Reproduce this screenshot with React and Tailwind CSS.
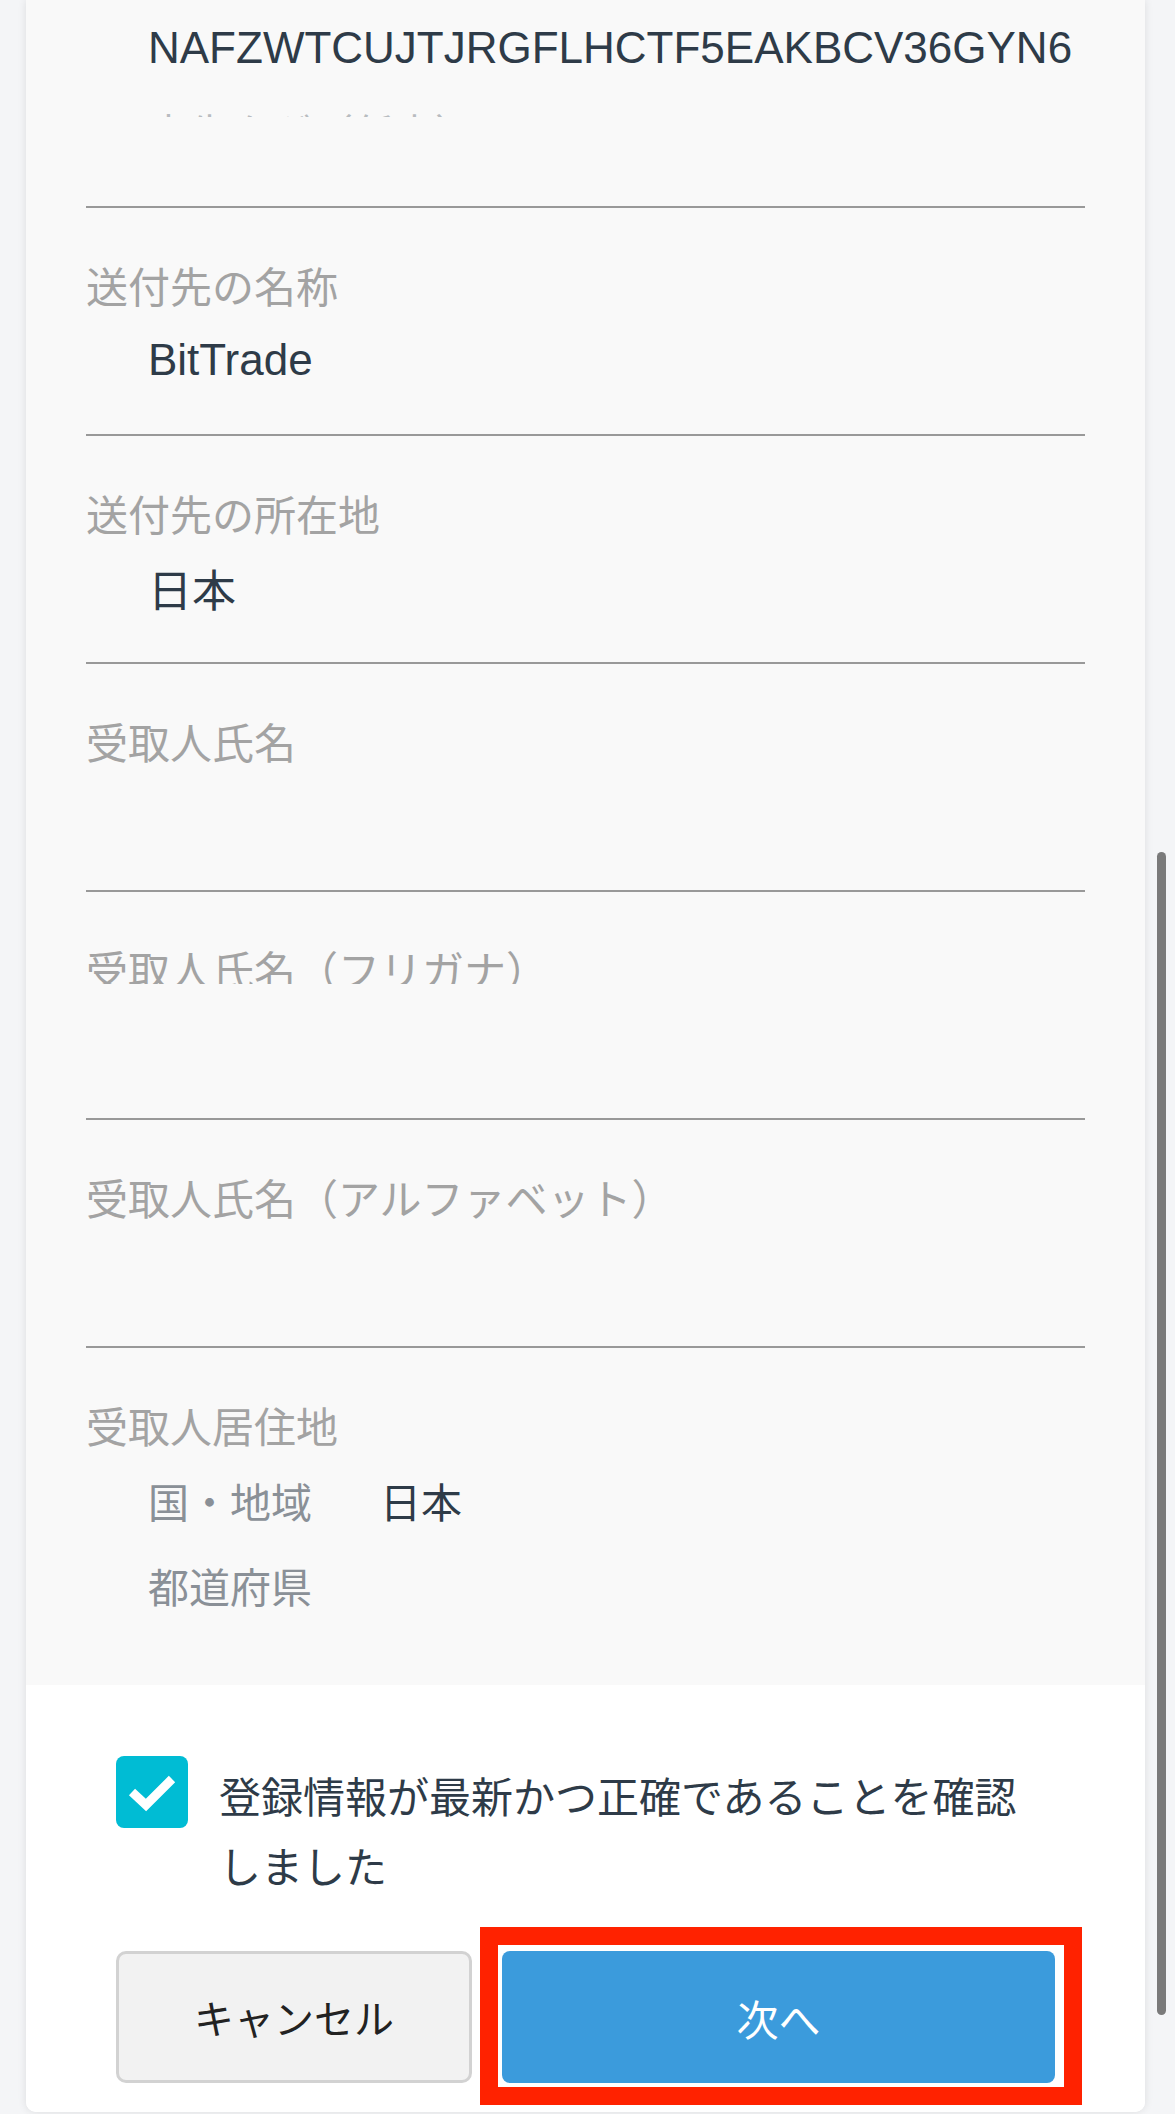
import React from "react";

const jp = { fontFamily: '"Noto Sans CJK JP", "Liberation Sans", sans-serif' };
const latin = { fontFamily: '"Liberation Sans", "Noto Sans CJK JP", sans-serif' };

const fields = [
  { label: "送付先の名称", value: "BitTrade", latinValue: true },
  { label: "送付先の所在地", value: "日本" },
  { label: "受取人氏名", value: "" },
  { label: "受取人氏名（フリガナ）", value: "", clipped: true },
  { label: "受取人氏名（アルファベット）", value: "" },
];

const Field = ({ label, value, latinValue, clipped }) => (
  <div className="h-[228px] border-b-2 border-[#999999] pt-[49px]">
    <div
      className={`text-[42px] leading-[56px] text-[#a3a3a3] ${clipped ? "h-[43px] overflow-hidden" : "h-[56px]"}`}
      style={jp}
    >
      {label}
    </div>
    <div
      className={`h-[56px] pl-[62px] text-[44px] leading-[56px] text-[#2e3b48] ${clipped ? "mt-[32px]" : "mt-[19px]"}`}
      style={latinValue ? latin : jp}
    >
      {value}
    </div>
  </div>
);

export default function App() {
  return (
    <div className="relative h-[2114px] w-[1175px] overflow-hidden bg-[#f4f5f7]">
      <div className="ml-[26px] w-[1119px] overflow-hidden rounded-b-[10px] bg-white shadow-[0_0_8px_rgba(0,0,0,0.1)]">
        <div className="bg-[#f9f9f9] px-[60px]">
          <div className="h-[208px] border-b-2 border-[#999999] pt-[20px]">
            <div className="pl-[62px] text-[44px] leading-[56px] text-[#2e3b48]" style={latin}>
              NAFZWTCUJTJRGFLHCTF5EAKBCV36GYN6
            </div>
            <div className="mt-[35px] h-[6px] overflow-hidden pl-[62px]">
              <div className="text-[41px] leading-none text-[#b8bcc0]" style={jp}>
                宛先タグ（任意）
              </div>
            </div>
          </div>

          {fields.map((f) => (
            <Field key={f.label} {...f} />
          ))}

          <div className="h-[337px] pt-[49px]">
            <div className="h-[56px] text-[42px] leading-[56px] text-[#a3a3a3]" style={jp}>
              受取人居住地
            </div>
            <div className="mt-[19px] flex h-[56px] pl-[62px] text-[41px] leading-[56px]" style={jp}>
              <span className="w-[232px] text-[#8a9097]">国・地域</span>
              <span className="text-[#2e3b48]">日本</span>
            </div>
            <div className="mt-[29px] flex h-[56px] pl-[62px] text-[41px] leading-[56px]" style={jp}>
              <span className="w-[232px] text-[#8a9097]">都道府県</span>
            </div>
          </div>
        </div>

        <div className="h-[427px] bg-white px-[90px] pt-[71px]">
          <div className="flex items-start">
            <div className="flex h-[72px] w-[72px] shrink-0 items-center justify-center rounded-[8px] bg-[#00bcd4]">
              <svg width="50" height="40" viewBox="0 0 50 40" fill="none">
                <polyline
                  points="5,20 19,33 45,7"
                  stroke="white"
                  strokeWidth="9"
                  strokeLinecap="butt"
                  strokeLinejoin="miter"
                />
              </svg>
            </div>
            <div
              className="ml-[31px] mt-[4px] w-[820px] text-[42px] leading-[70px] text-[#2e3b48]"
              style={jp}
            >
              登録情報が最新かつ正確であることを確認しました
            </div>
          </div>

          <div className="mt-[51px] flex gap-[30px]">
            <button
              className="flex h-[132px] w-[356px] items-center justify-center rounded-[10px] border-[3px] border-[#d2d2d2] bg-[#f2f2f2] text-[40px] font-normal text-[#222222]"
              style={jp}
            >
              キャンセル
            </button>
            <div className="relative flex-1">
              <button
                className="flex h-[132px] w-full items-center justify-center rounded-[8px] bg-[#3b9bdc] text-[42px] text-white"
                style={jp}
              >
                次へ
              </button>
              <div className="pointer-events-none absolute -bottom-[22px] -left-[22px] -right-[27px] -top-[24px] border-[18px] border-[#ff2200]" />
            </div>
          </div>
        </div>
      </div>

      <div className="absolute left-[1157px] top-[852px] h-[1163px] w-[9px] rounded-full bg-[#7a7a7a]" />
    </div>
  );
}
